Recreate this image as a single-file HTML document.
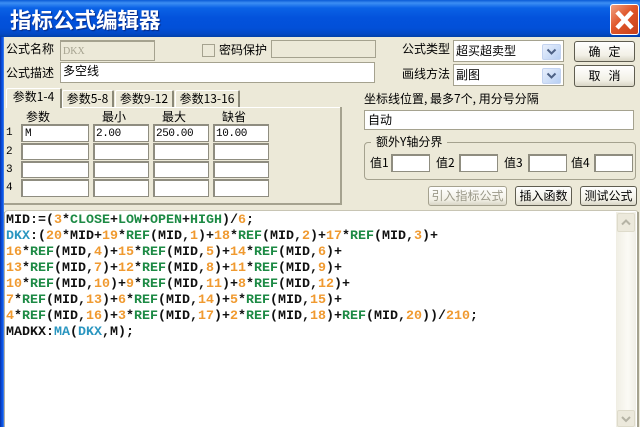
<!DOCTYPE html>
<html><head><meta charset="utf-8">
<style>
html,body{margin:0;padding:0;width:640px;height:427px;overflow:hidden;background:#ece9d8}
*{box-sizing:border-box}
body{position:relative;font:12px/14px "WenQuanYi Zen Hei","Noto Sans CJK SC",sans-serif;color:#000}
.a{position:absolute;white-space:nowrap}
.i{position:absolute;background:#fff;border:1px solid #8f8d80;border-width:2px 1px 1px 2px;white-space:nowrap;overflow:hidden}
.i2{border:1px solid #a5a28f}
.t{position:absolute;white-space:nowrap;line-height:14px}
.b{position:absolute;border:1px solid #5f5d50;border-radius:3px;background:linear-gradient(#fff,#f2f0e6 70%,#d9d6c6);text-align:center;white-space:nowrap}
.tab{position:absolute;border:1px solid #a5a28f;border-bottom:none;border-right:2px solid #8b8978;background:#ece9d8;border-top-color:#fff;border-left-color:#fff;text-align:center;white-space:nowrap;border-radius:2px 2px 0 0;font-size:12px}
.cb{position:absolute;background:linear-gradient(135deg,#e8effc,#b7cff3);border:1px solid #c3d3f0;border-radius:2px}
.m{font-family:"Liberation Mono",monospace;font-size:11px;letter-spacing:-.4px}
#code{position:absolute;left:6px;top:213px;font:bold 13.33px/16px "Liberation Mono",monospace;white-space:pre;color:#111}
#code b{font-weight:bold;color:#f09a30}
#code i{font-style:normal;color:#1c8a44}
#code u{text-decoration:none;color:#2a96c0}
</style></head><body>
<!-- title bar -->
<div class="a" style="left:0;top:0;width:640px;height:37px;background:linear-gradient(#0a5ad6 0,#3c8ef3 3px,#0a62e6 8px,#0352dc 18px,#0250d8 28px,#0348c4 34px,#0240a8 37px)"></div>
<div class="a" style="left:10px;top:7px;color:#fff;font:bold 21.5px/26px 'WenQuanYi Zen Hei','Noto Sans CJK SC',sans-serif;text-shadow:1px 1px 1px #0a2a80">指标公式编辑器</div>
<div class="a" style="left:610px;top:4px;width:29px;height:31px;background:linear-gradient(135deg,#f0a080,#e0562a 45%,#c8401a);border:1px solid #fff;border-radius:3px"></div>
<svg class="a" style="left:610px;top:4px" width="29" height="31"><path d="M7 8 L22 24 M22 8 L7 24" stroke="#fff" stroke-width="4.5" fill="none"/></svg>
<!-- window border -->
<div class="a" style="left:0;top:37px;width:4px;height:390px;background:linear-gradient(90deg,#0830a0,#0a4ad8 40%,#0a5aec 70%,#5a8ae0)"></div>

<div class="t" style="left:6px;top:42px">公式名称</div>
<div class="i i2" style="left:60px;top:40px;width:95px;height:21px;background:#ece9d8;color:#a5a28f;padding:3px 0 0 2px;font:10px/14px 'Liberation Serif',serif;border-width:2px 1px 1px 1px;border-color:#a5a28f">DKX</div>
<div class="a" style="left:202px;top:44px;width:13px;height:13px;border:1px solid #a5a28f;background:#ece9d8"></div>
<div class="t" style="left:219px;top:43px">密码保护</div>
<div class="i i2" style="left:271px;top:40px;width:105px;height:18px;background:#ece9d8"></div>
<div class="t" style="left:6px;top:66px">公式描述</div>
<div class="i i2" style="left:60px;top:62px;width:315px;height:21px;padding:1px 0 0 2px">多空线</div>

<div class="t" style="left:402px;top:42px">公式类型</div>
<div class="i i2" style="left:453px;top:40px;width:111px;height:22px;padding:3px 0 0 2px">超买超卖型</div>
<div class="cb" style="left:542px;top:44px;width:19px;height:16px"></div>
<svg class="a" style="left:542px;top:44px" width="19" height="16"><path d="M5.500 5.500 L9.500 9.500 L13.500 5.500" stroke="#4d6185" stroke-width="2" fill="none"/></svg>
<div class="t" style="left:402px;top:67px">画线方法</div>
<div class="i i2" style="left:453px;top:64px;width:111px;height:22px;padding:3px 0 0 2px">副图</div>
<div class="cb" style="left:542px;top:68px;width:19px;height:16px"></div>
<svg class="a" style="left:542px;top:68px" width="19" height="16"><path d="M5.500 5.500 L9.500 9.500 L13.500 5.500" stroke="#4d6185" stroke-width="2" fill="none"/></svg>
<div class="b" style="left:574px;top:41px;width:61px;height:21px;line-height:19px">确&nbsp;&nbsp;&nbsp;定</div>
<div class="b" style="left:574px;top:65px;width:61px;height:22px;line-height:20px">取&nbsp;&nbsp;&nbsp;消</div>

<!-- tabs -->
<div class="a" style="left:6px;top:107px;width:336px;height:1px;background:#fff"></div>
<div class="a" style="left:340px;top:107px;width:2px;height:97px;background:#a5a28f"></div>
<div class="a" style="left:4px;top:203px;width:338px;height:2px;background:#a5a28f"></div>
<div class="tab" style="left:62px;top:90px;width:52px;height:17px;line-height:15px">参数5-8</div>
<div class="tab" style="left:115px;top:90px;width:59px;height:17px;line-height:15px">参数9-12</div>
<div class="tab" style="left:175px;top:90px;width:65px;height:17px;line-height:15px">参数13-16</div>
<div class="tab" style="left:6px;top:88px;width:56px;height:20px;line-height:15px">参数1-4</div>

<div class="t" style="left:26px;top:110px">参数</div>
<div class="t" style="left:102px;top:110px">最小</div>
<div class="t" style="left:162px;top:110px">最大</div>
<div class="t" style="left:222px;top:110px">缺省</div>
<div class="t m" style="left:6px;top:126px">1</div>
<div class="t m" style="left:6px;top:145px">2</div>
<div class="t m" style="left:6px;top:163px">3</div>
<div class="t m" style="left:6px;top:181px">4</div>

<div class="i m" style="left:21px;top:124px;width:68px;height:18px;padding:1px 0 0 2px;line-height:14px">M</div>
<div class="i m" style="left:93px;top:124px;width:56px;height:18px;padding:1px 0 0 1px;line-height:14px">2.00</div>
<div class="i m" style="left:153px;top:124px;width:56px;height:18px;padding:1px 0 0 1px;line-height:14px">250.00</div>
<div class="i m" style="left:213px;top:124px;width:56px;height:18px;padding:1px 0 0 1px;line-height:14px">10.00</div>
<div class="i" style="left:21px;top:143px;width:68px;height:17px"></div>
<div class="i" style="left:93px;top:143px;width:56px;height:17px"></div>
<div class="i" style="left:153px;top:143px;width:56px;height:17px"></div>
<div class="i" style="left:213px;top:143px;width:56px;height:17px"></div>
<div class="i" style="left:21px;top:161px;width:68px;height:17px"></div>
<div class="i" style="left:93px;top:161px;width:56px;height:17px"></div>
<div class="i" style="left:153px;top:161px;width:56px;height:17px"></div>
<div class="i" style="left:213px;top:161px;width:56px;height:17px"></div>
<div class="i" style="left:21px;top:179px;width:68px;height:18px"></div>
<div class="i" style="left:93px;top:179px;width:56px;height:18px"></div>
<div class="i" style="left:153px;top:179px;width:56px;height:18px"></div>
<div class="i" style="left:213px;top:179px;width:56px;height:18px"></div>

<!-- right -->
<div class="t" style="left:364px;top:92px">坐标线位置, 最多7个, 用分号分隔</div>
<div class="i i2" style="left:364px;top:110px;width:270px;height:20px;padding:2px 0 0 3px">自动</div>
<div class="a" style="left:364px;top:142px;width:272px;height:38px;border:1px solid #a5a28f;border-radius:4px"></div>
<div class="t" style="left:371px;top:135px;background:#ece9d8;padding:0 5px">额外Y轴分界</div>
<div class="t" style="left:370px;top:156px">值1</div>
<div class="i" style="left:391px;top:154px;width:39px;height:18px"></div>
<div class="t" style="left:436px;top:156px">值2</div>
<div class="i" style="left:459px;top:154px;width:39px;height:18px"></div>
<div class="t" style="left:504px;top:156px">值3</div>
<div class="i" style="left:528px;top:154px;width:39px;height:18px"></div>
<div class="t" style="left:571px;top:156px">值4</div>
<div class="i" style="left:594px;top:154px;width:39px;height:18px"></div>
<div class="b" style="left:428px;top:186px;width:79px;height:20px;line-height:18px;color:#9a9888;border-color:#a5a28f">引入指标公式</div>
<div class="b" style="left:515px;top:186px;width:57px;height:20px;line-height:18px">插入函数</div>
<div class="b" style="left:580px;top:186px;width:57px;height:20px;line-height:18px">测试公式</div>

<!-- editor -->
<div class="a" style="left:4px;top:210px;width:635px;height:217px;background:#fff;border:1px solid #c8c5b4;border-bottom:none;border-radius:4px 4px 0 0"></div>
<div class="a" style="left:4px;top:212px;width:1px;height:215px;background:#b5b3a5"></div>
<div class="a" style="left:616px;top:212px;width:20px;height:215px;background:linear-gradient(90deg,#f0eee4,#fbfaf5 60%,#f0eee6)"></div>
<div class="a" style="left:637px;top:212px;width:2px;height:215px;background:#a5a28f"></div>
<div class="a" style="left:617px;top:213px;width:18px;height:19px;background:#ece9dc;border:1px solid #dedbcb;border-radius:2px"></div>
<svg class="a" style="left:617px;top:213px" width="18" height="19"><path d="M5 11.500 L9 7.500 L13 11.500" stroke="#b5b3a5" stroke-width="2" fill="none"/></svg>
<div class="a" style="left:617px;top:410px;width:18px;height:17px;background:#ece9dc;border:1px solid #dedbcb;border-radius:2px"></div>
<svg class="a" style="left:617px;top:410px" width="18" height="17"><path d="M5 7 L9 11 L13 7" stroke="#b5b3a5" stroke-width="2" fill="none"/></svg>
<div id="code">MID:=(<b>3</b>*<i>CLOSE</i>+<i>LOW</i>+<i>OPEN</i>+<i>HIGH</i>)/<b>6</b>;
<u>DKX</u>:(<b>20</b>*MID+<b>19</b>*<i>REF</i>(MID,<b>1</b>)+<b>18</b>*<i>REF</i>(MID,<b>2</b>)+<b>17</b>*<i>REF</i>(MID,<b>3</b>)+
<b>16</b>*<i>REF</i>(MID,<b>4</b>)+<b>15</b>*<i>REF</i>(MID,<b>5</b>)+<b>14</b>*<i>REF</i>(MID,<b>6</b>)+
<b>13</b>*<i>REF</i>(MID,<b>7</b>)+<b>12</b>*<i>REF</i>(MID,<b>8</b>)+<b>11</b>*<i>REF</i>(MID,<b>9</b>)+
<b>10</b>*<i>REF</i>(MID,<b>10</b>)+<b>9</b>*<i>REF</i>(MID,<b>11</b>)+<b>8</b>*<i>REF</i>(MID,<b>12</b>)+
<b>7</b>*<i>REF</i>(MID,<b>13</b>)+<b>6</b>*<i>REF</i>(MID,<b>14</b>)+<b>5</b>*<i>REF</i>(MID,<b>15</b>)+
<b>4</b>*<i>REF</i>(MID,<b>16</b>)+<b>3</b>*<i>REF</i>(MID,<b>17</b>)+<b>2</b>*<i>REF</i>(MID,<b>18</b>)+<i>REF</i>(MID,<b>20</b>))/<b>210</b>;
MADKX:<u>MA</u>(<u>DKX</u>,M);</div>
</body></html>
